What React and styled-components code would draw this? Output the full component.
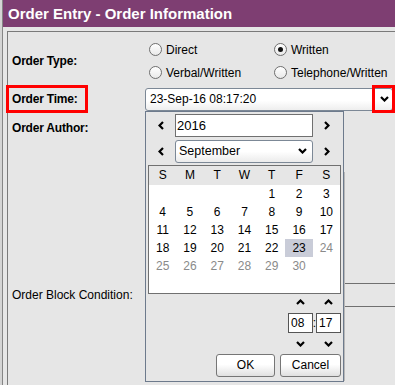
import React from 'react'
import styled, { createGlobalStyle } from 'styled-components'

const GlobalStyle = createGlobalStyle`
  html, body {
    margin: 0;
    padding: 0;
  }
  body {
    background: #e6e6e6;
    font-family: "Liberation Sans", Arial, sans-serif;
    font-size: 12px;
    color: #000;
  }
`

const Screen = styled.div`
  width: 395px;
  height: 385px;
  overflow: hidden;
  display: flex;
  box-sizing: border-box;
  padding-left: 2px;
  background: #d4d4d4;
`

const Window = styled.div`
  flex: 1;
  min-width: 0;
  display: flex;
  flex-direction: column;
  border-left: 1px solid #858585;
  background: #e6e6e6;
`

const TitleBar = styled.div`
  height: 27px;
  flex-shrink: 0;
  display: flex;
  align-items: center;
  padding-left: 5px;
  background: #7e3e72;
  color: #fff;
  font-size: 15px;
  font-weight: bold;
  white-space: nowrap;
`

const Panel = styled.div`
  flex: 1;
  margin: 4px -30px 0 4px;
  padding: 5px 0 0 4px;
  border-top: 1px solid #7a7a7a;
  border-left: 1px solid #7a7a7a;
  display: flex;
  flex-direction: column;
`

const FieldRow = styled.div`
  display: grid;
  grid-template-columns: 133px 1fr;
  align-items: center;
  height: ${p => p.$h}px;
  margin-top: ${p => p.$mt || 0}px;
`

const Label = styled.div`
  font-weight: ${p => (p.$bold ? 'bold' : 'normal')};
  letter-spacing: ${p => (p.$bold ? '-0.2px' : '0')};
  white-space: nowrap;
`

const MarkedLabel = styled(Label)`
  box-sizing: border-box;
  width: 82px;
  height: 28px;
  margin-left: -6px;
  padding-left: 3px;
  border: 3px solid #ff0000;
  display: flex;
  align-items: center;
`

const RadioGrid = styled.div`
  display: grid;
  grid-template-columns: 125px auto;
  grid-auto-rows: 23px;
  padding-left: 4px;
`

const RadioOption = styled.label`
  display: flex;
  align-items: center;
  gap: 4px;
  white-space: nowrap;
`

const RadioCircle = styled.span`
  box-sizing: border-box;
  width: 13px;
  height: 13px;
  border-radius: 50%;
  border: 1px solid #6f6f6f;
  background: linear-gradient(#ffffff, #e9e9e9);
  display: flex;
  align-items: center;
  justify-content: center;

  &::after {
    content: '';
    width: 5px;
    height: 5px;
    border-radius: 50%;
    background: #111;
    display: ${p => (p.$checked ? 'block' : 'none')};
  }
`

const ComboWrap = styled.div`
  position: relative;
  width: 248px;
  height: 23px;
`

const Combo = styled.div`
  box-sizing: border-box;
  height: 100%;
  display: flex;
  align-items: center;
  padding-left: 4px;
  border: 1px solid #7c8896;
  border-radius: 3px;
  background: linear-gradient(#ffffff 55%, #eeeeee);
  white-space: nowrap;
`

const ArrowMark = styled.div`
  position: absolute;
  left: 227px;
  top: -3px;
  box-sizing: border-box;
  width: 23px;
  height: 28px;
  border: 3px solid #ff0000;
  display: flex;
  align-items: center;
  justify-content: center;
  padding-left: 1px;
`

const Popup = styled.div`
  position: absolute;
  left: 0;
  top: 23px;
  z-index: 5;
  box-sizing: border-box;
  width: 199px;
  height: 271px;
  padding: 2px 2px 4px 0;
  border: 1px solid #6d7a8c;
  background: #e6e6e6;
  display: flex;
  flex-direction: column;

  &::after {
    content: '';
    position: absolute;
    right: -2px;
    top: 60px;
    bottom: 0;
    width: 1px;
    background: #b8b8b8;
  }
`

const NavRow = styled.div`
  display: grid;
  grid-template-columns: 29px 138px 1fr;
  height: 23px;
  margin-top: ${p => p.$mt || 0}px;
`

const NavButton = styled.div`
  display: flex;
  align-items: center;
  justify-content: center;
`

const YearField = styled.div`
  box-sizing: border-box;
  display: flex;
  align-items: center;
  padding-left: 1px;
  border: 1px solid #707070;
  background: #fff;
  font-size: 13px;
`

const MonthSelect = styled.div`
  box-sizing: border-box;
  display: flex;
  align-items: center;
  justify-content: space-between;
  padding: 0 5px 0 3px;
  border: 1px solid #7c8896;
  border-radius: 3px;
  background: linear-gradient(#ffffff 50%, #ebebeb);
  font-size: 12.5px;
`

const Calendar = styled.div`
  margin: 2px 0 0 2px;
  width: 193px;
  box-sizing: border-box;
  border: 1px solid #707070;
  background: #fff;
`

const WeekHeader = styled.div`
  display: grid;
  grid-template-columns: repeat(7, 1fr);
  height: 19px;
  background: #e6e6e6;
`

const Days = styled.div`
  display: grid;
  grid-template-columns: repeat(7, 1fr);
  grid-template-rows: repeat(6, 18px);
`

const Cell = styled.div`
  display: flex;
  align-items: center;
  justify-content: center;
  color: ${p => (p.$muted ? '#8a8a8a' : '#000')};
  background: ${p => (p.$selected ? '#c9ccd8' : 'transparent')};
`

const TimeGrid = styled.div`
  align-self: flex-end;
  margin-top: 2px;
  display: grid;
  grid-template-columns: 25px 3px 25px;
  grid-template-rows: 12px 20px 12px;
  row-gap: 5px;
`

const Spin = styled.div`
  display: flex;
  align-items: center;
  justify-content: center;
`

const TimeBox = styled.div`
  box-sizing: border-box;
  display: flex;
  align-items: center;
  padding-left: 2px;
  border: 1px solid #555;
  background: #fff;
`

const Colon = styled.div`
  display: flex;
  align-items: center;
  justify-content: center;
`

const ButtonRow = styled.div`
  margin-top: 4px;
  display: flex;
  justify-content: flex-end;
  gap: 5px;
`

const Button = styled.button`
  box-sizing: border-box;
  width: ${p => p.$w}px;
  height: 23px;
  padding: 0;
  border: 1px solid #767676;
  border-radius: 3px;
  background: linear-gradient(#ffffff 45%, #e0e0e0);
  font-family: "Liberation Sans", Arial, sans-serif;
  font-size: 12px;
  color: #000;
`

const Field = styled.div`
  box-sizing: border-box;
  height: 24px;
  border-top: 1px solid #707070;
  border-bottom: 1px solid #707070;
`

const paths = {
  left: '5,1 1.5,4.5 5,8',
  right: '1,1 4.5,4.5 1,8',
  down: '1,1 4.5,4.5 8,1',
  up: '1,5 4.5,1.5 8,5'
}

const Chevron = ({ dir }) => {
  const vertical = dir === 'up' || dir === 'down'
  const w = vertical ? 9 : 6
  const h = vertical ? 6 : 9
  return (
    <svg width={w} height={h} viewBox={`0 0 ${w} ${h}`}>
      <polyline points={paths[dir]} fill="none" stroke="#000" strokeWidth="2.2" />
    </svg>
  )
}

const weekDays = ['S', 'M', 'T', 'W', 'T', 'F', 'S']

const App = () => {
  const cells = []
  for (let i = 0; i < 4; i++) cells.push(<Cell key={'e' + i} />)
  for (let d = 1; d <= 30; d++) {
    cells.push(
      <Cell key={d} $selected={d === 23} $muted={d > 23}>
        {d}
      </Cell>
    )
  }

  return (
    <Screen>
      <GlobalStyle />
      <Window>
        <TitleBar>Order Entry - Order Information</TitleBar>
        <Panel>
          <FieldRow $h={48}>
            <Label $bold>Order Type:</Label>
            <RadioGrid>
              <RadioOption><RadioCircle />Direct</RadioOption>
              <RadioOption><RadioCircle $checked />Written</RadioOption>
              <RadioOption><RadioCircle />Verbal/Written</RadioOption>
              <RadioOption><RadioCircle />Telephone/Written</RadioOption>
            </RadioGrid>
          </FieldRow>

          <FieldRow $h={28}>
            <MarkedLabel $bold>Order Time:</MarkedLabel>
            <ComboWrap>
              <Combo>23-Sep-16 08:17:20</Combo>
              <ArrowMark><Chevron dir="down" /></ArrowMark>
              <Popup>
                <NavRow>
                  <NavButton><Chevron dir="left" /></NavButton>
                  <YearField>2016</YearField>
                  <NavButton><Chevron dir="right" /></NavButton>
                </NavRow>
                <NavRow $mt={3}>
                  <NavButton><Chevron dir="left" /></NavButton>
                  <MonthSelect>September<Chevron dir="down" /></MonthSelect>
                  <NavButton><Chevron dir="right" /></NavButton>
                </NavRow>
                <Calendar>
                  <WeekHeader>
                    {weekDays.map((w, i) => <Cell key={i}>{w}</Cell>)}
                  </WeekHeader>
                  <Days>{cells}</Days>
                </Calendar>
                <TimeGrid>
                  <Spin><Chevron dir="up" /></Spin>
                  <span />
                  <Spin><Chevron dir="up" /></Spin>
                  <TimeBox>08</TimeBox>
                  <Colon>:</Colon>
                  <TimeBox>17</TimeBox>
                  <Spin><Chevron dir="down" /></Spin>
                  <span />
                  <Spin><Chevron dir="down" /></Spin>
                </TimeGrid>
                <ButtonRow>
                  <Button $w={59}>OK</Button>
                  <Button $w={61}>Cancel</Button>
                </ButtonRow>
              </Popup>
            </ComboWrap>
          </FieldRow>

          <FieldRow $h={30}>
            <Label $bold>Order Author:</Label>
          </FieldRow>

          <FieldRow $h={24} $mt={140}>
            <Label>Order Block Condition:</Label>
            <Field />
          </FieldRow>
        </Panel>
      </Window>
    </Screen>
  )
}

export default App
